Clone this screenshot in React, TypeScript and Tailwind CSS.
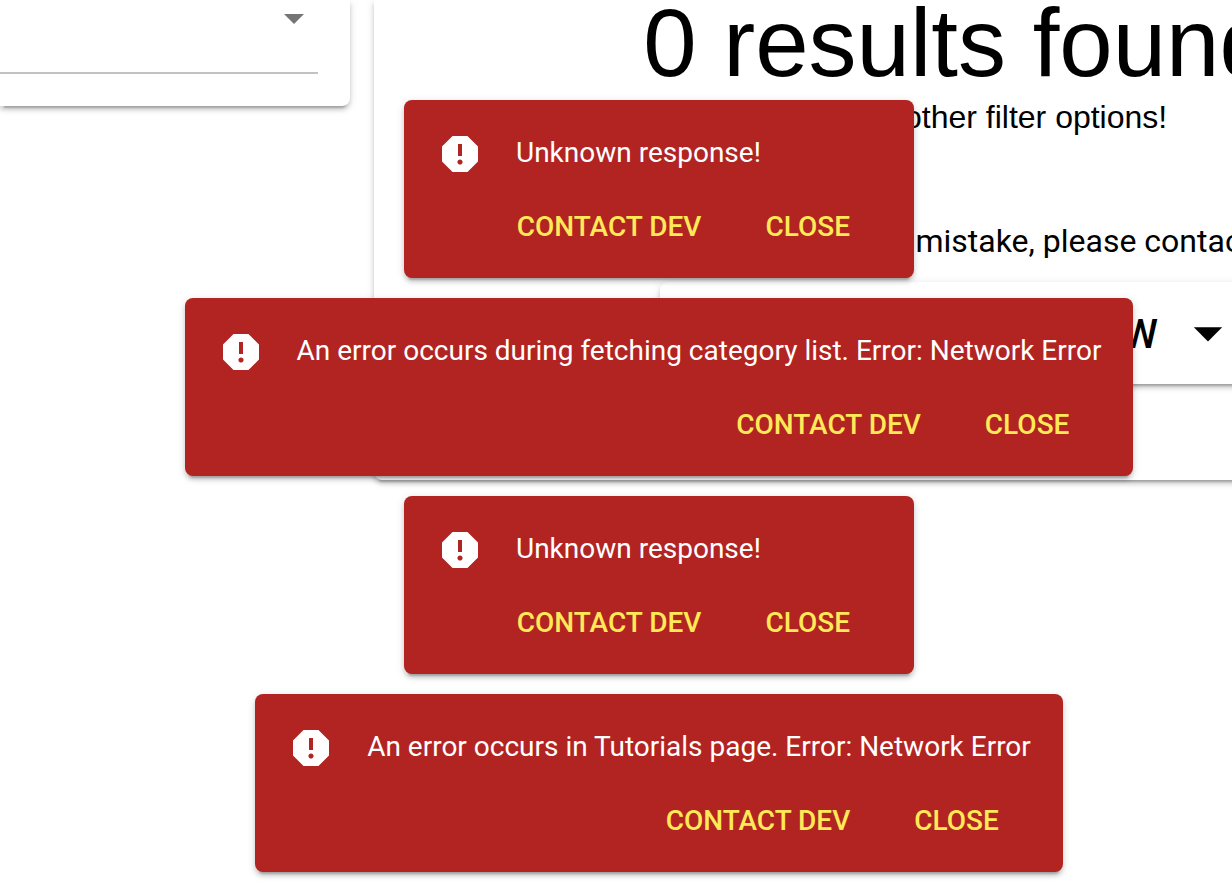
import React from "react";

const elevated =
  "shadow-[0_6px_2px_-4px_rgba(0,0,0,0.2),0_4px_4px_0_rgba(0,0,0,0.14),0_2px_10px_0_rgba(0,0,0,0.12)]";

const errors = [
  "Unknown response!",
  "An error occurs during fetching category list. Error: Network Error",
  "Unknown response!",
  "An error occurs in Tutorials page. Error: Network Error",
];

function AlertIcon() {
  return (
    <svg viewBox="0 0 24 24" className="size-12 shrink-0" fill="white" aria-hidden="true">
      <path d="M13 13h-2V7h2m-1 10.3c-.72 0-1.3-.58-1.3-1.3s.58-1.3 1.3-1.3 1.3.58 1.3 1.3-.58 1.3-1.3 1.3M15.73 3H8.27L3 8.27v7.46L8.27 21h7.46L21 15.73V8.27L15.73 3Z" fillRule="evenodd" />
    </svg>
  );
}

function Snackbar({ message }: { message: string }) {
  return (
    <div
      role="alert"
      className={`flex min-h-[178px] min-w-[510px] flex-col rounded-lg bg-[#b22422] pt-[30px] ${elevated}`}
    >
      <div className="flex items-start gap-8 px-8">
        <AlertIcon />
        <p className="text-[28px] leading-[46px] whitespace-nowrap text-white">{message}</p>
      </div>
      <div className="mt-[15px] flex justify-end gap-16 pr-16 text-[28px] leading-[68px] font-medium text-[#ffe957]">
        <button type="button">CONTACT DEV</button>
        <button type="button">CLOSE</button>
      </div>
    </div>
  );
}

export default function App() {
  return (
    <div className="relative min-h-screen overflow-hidden bg-white font-[Roboto,sans-serif] text-black">
      <div className="flex items-start gap-6">
        <aside className={`h-[106px] w-[350px] shrink-0 rounded-br-lg bg-white pr-8 ${elevated}`}>
          <button
            type="button"
            aria-label="Open filter options"
            className="flex h-[74px] w-full items-start justify-end border-b-2 border-[#c2c2c2]"
          >
            <svg viewBox="0 0 24 24" className="-mt-[6px] size-12" fill="#757575" aria-hidden="true">
              <path d="M7 10l5 5 5-5z" />
            </svg>
          </button>
        </aside>
        <main className={`flex h-[480px] w-[1164px] shrink-0 flex-col items-center rounded-b-lg bg-white ${elevated}`}>
          <h1 className="pl-1 font-['Liberation_Sans',sans-serif] text-[96px] leading-[86px]">0 results found</h1>
          <p className="pt-[7px] pl-2 font-['Liberation_Sans',sans-serif] text-[32px] leading-12">Please try other filter options!</p>
          <p className="pt-[76px] pl-6 text-[32px] leading-12">If you think this is a mistake, please contact us.</p>
          <button
            type="button"
            className={`mt-[17px] flex h-[102px] w-[592px] items-center justify-end gap-4 rounded-lg bg-white pr-[10px] text-[40px] font-medium ${elevated}`}
          >
            <span className="pt-1">NEW</span>
            <svg viewBox="0 0 24 24" className="size-[68px]" fill="currentColor" aria-hidden="true">
              <path d="M7 10l5 5 5-5z" />
            </svg>
          </button>
        </main>
      </div>
      <div className="absolute inset-x-0 top-[100px] flex flex-col items-center gap-5 pl-[86px]">
        {errors.map((message, index) => (
          <Snackbar key={index} message={message} />
        ))}
      </div>
    </div>
  );
}
